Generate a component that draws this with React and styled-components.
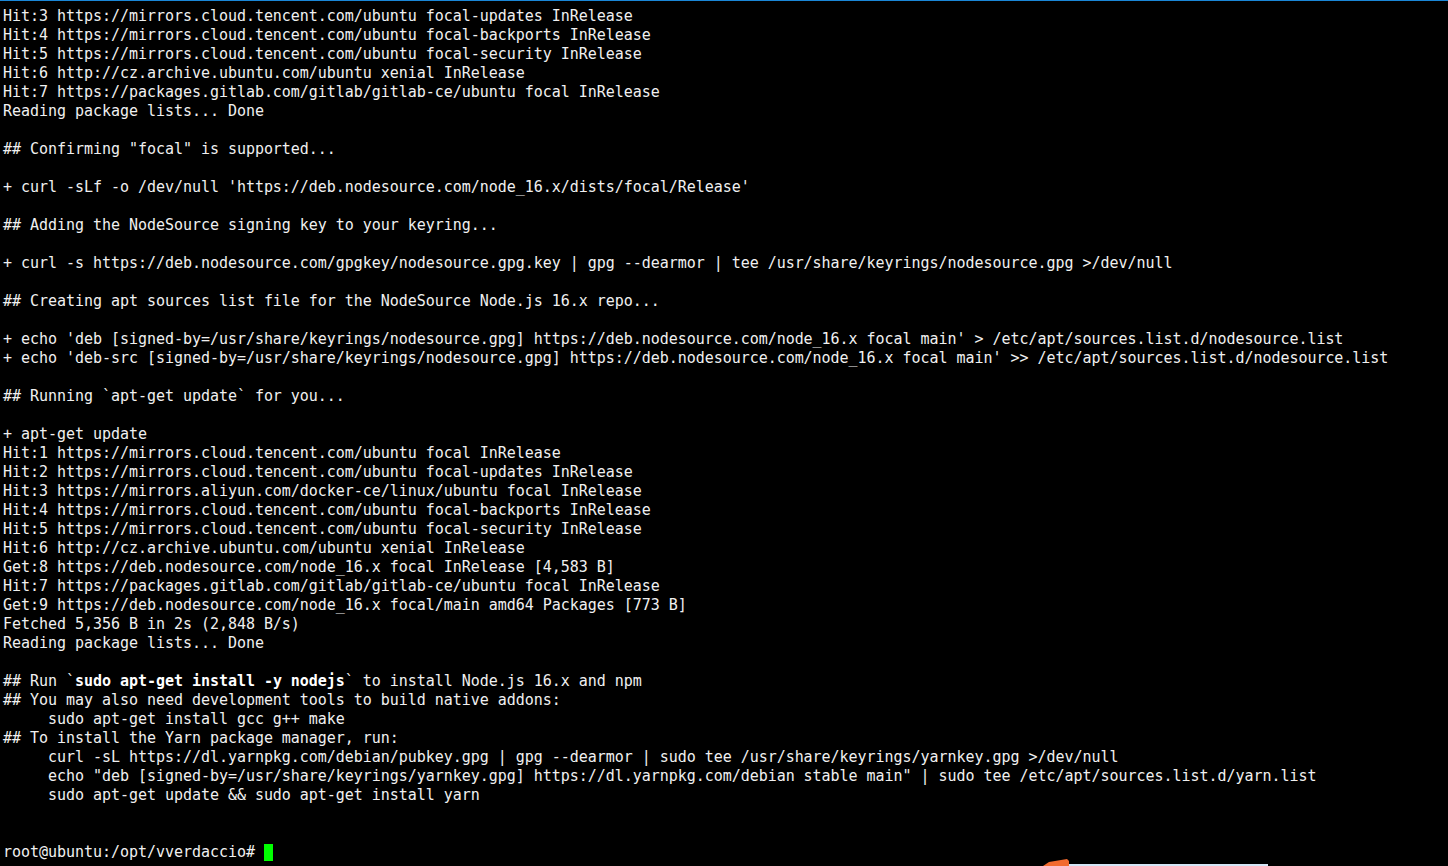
import styled, { createGlobalStyle } from "styled-components";

const lines = [
  "Hit:3 https://mirrors.cloud.tencent.com/ubuntu focal-updates InRelease",
  "Hit:4 https://mirrors.cloud.tencent.com/ubuntu focal-backports InRelease",
  "Hit:5 https://mirrors.cloud.tencent.com/ubuntu focal-security InRelease",
  "Hit:6 http://cz.archive.ubuntu.com/ubuntu xenial InRelease",
  "Hit:7 https://packages.gitlab.com/gitlab/gitlab-ce/ubuntu focal InRelease",
  "Reading package lists... Done",
  "",
  '## Confirming "focal" is supported...',
  "",
  "+ curl -sLf -o /dev/null 'https://deb.nodesource.com/node_16.x/dists/focal/Release'",
  "",
  "## Adding the NodeSource signing key to your keyring...",
  "",
  "+ curl -s https://deb.nodesource.com/gpgkey/nodesource.gpg.key | gpg --dearmor | tee /usr/share/keyrings/nodesource.gpg >/dev/null",
  "",
  "## Creating apt sources list file for the NodeSource Node.js 16.x repo...",
  "",
  "+ echo 'deb [signed-by=/usr/share/keyrings/nodesource.gpg] https://deb.nodesource.com/node_16.x focal main' > /etc/apt/sources.list.d/nodesource.list",
  "+ echo 'deb-src [signed-by=/usr/share/keyrings/nodesource.gpg] https://deb.nodesource.com/node_16.x focal main' >> /etc/apt/sources.list.d/nodesource.list",
  "",
  "## Running `apt-get update` for you...",
  "",
  "+ apt-get update",
  "Hit:1 https://mirrors.cloud.tencent.com/ubuntu focal InRelease",
  "Hit:2 https://mirrors.cloud.tencent.com/ubuntu focal-updates InRelease",
  "Hit:3 https://mirrors.aliyun.com/docker-ce/linux/ubuntu focal InRelease",
  "Hit:4 https://mirrors.cloud.tencent.com/ubuntu focal-backports InRelease",
  "Hit:5 https://mirrors.cloud.tencent.com/ubuntu focal-security InRelease",
  "Hit:6 http://cz.archive.ubuntu.com/ubuntu xenial InRelease",
  "Get:8 https://deb.nodesource.com/node_16.x focal InRelease [4,583 B]",
  "Hit:7 https://packages.gitlab.com/gitlab/gitlab-ce/ubuntu focal InRelease",
  "Get:9 https://deb.nodesource.com/node_16.x focal/main amd64 Packages [773 B]",
  "Fetched 5,356 B in 2s (2,848 B/s)",
  "Reading package lists... Done",
  "",
];

const tail = [
  "## You may also need development tools to build native addons:",
  "     sudo apt-get install gcc g++ make",
  "## To install the Yarn package manager, run:",
  "     curl -sL https://dl.yarnpkg.com/debian/pubkey.gpg | gpg --dearmor | sudo tee /usr/share/keyrings/yarnkey.gpg >/dev/null",
  '     echo "deb [signed-by=/usr/share/keyrings/yarnkey.gpg] https://dl.yarnpkg.com/debian stable main" | sudo tee /etc/apt/sources.list.d/yarn.list',
  "     sudo apt-get update && sudo apt-get install yarn",
  "",
  "",
];

function App() {
  return (
    <>
      <GlobalStyle />
      <Terminal>
        {lines.map((l, i) => (
          <Line key={i}>{l}</Line>
        ))}
        <Line>
          ## Run `<Bold>sudo apt-get install -y nodejs</Bold>` to install Node.js 16.x and npm
        </Line>
        {tail.map((l, i) => (
          <Line key={"t" + i}>{l}</Line>
        ))}
        <Line>
          root@ubuntu:/opt/vverdaccio# <Cursor />
        </Line>
      </Terminal>
      <Overlay>
        <svg width="26" height="7" viewBox="0 0 26 7">
          <path d="M0 7 L6 3 L24 0 L26 2 L26 7 Z" fill="#f26a2e" />
        </svg>
        <Panel />
      </Overlay>
    </>
  );
}

export default App;

const GlobalStyle = createGlobalStyle`
  html, body {
    margin: 0;
    padding: 0;
    background: #000000;
    overflow: hidden;
  }
`;

const Terminal = styled.div`
  height: 866px;
  box-sizing: border-box;
  border-top: 1px solid #1a86d6;
  padding: 6px 0 0 3px;
  background: #000000;
  color: #f0f0f0;
  font-family: "DejaVu Sans Mono", "Liberation Mono", monospace;
  font-size: 15px;
  letter-spacing: -0.035px;
  line-height: 19px;
`;

const Line = styled.div`
  height: 19px;
  white-space: pre;
`;

const Bold = styled.b`
  font-weight: 700;
  color: #ffffff;
`;

const Cursor = styled.span`
  display: inline-block;
  width: 9px;
  height: 17px;
  vertical-align: -4px;
  background: #00ff00;
`;

const Overlay = styled.div`
  position: absolute;
  left: 1043px;
  top: 859px;
  display: flex;
  align-items: flex-end;
`;

const Panel = styled.div`
  width: 199px;
  height: 2px;
  background: #d4e6f7;
`;
